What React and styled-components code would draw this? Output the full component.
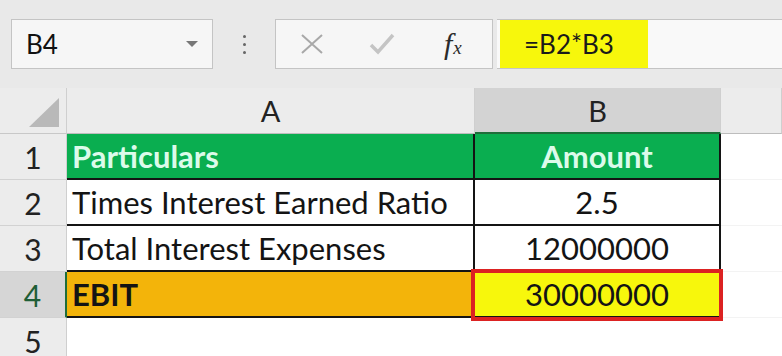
import React from "react";
import styled, { createGlobalStyle } from "styled-components";

const GlobalStyle = createGlobalStyle`
  body {
    margin: 0;
    background: #ffffff;
    overflow: hidden;
  }
`;

// 페이지 전체
const Page = styled.div`
  width: 782px;
  height: 356px;
  overflow: hidden;
  font-family: "Lato", "Liberation Sans", sans-serif;
  color: #151515;
`;

// 수식 입력줄 영역
const Toolbar = styled.div`
  height: 88px;
  background: #e9e9e9;
  display: flex;
  align-items: flex-start;
  padding-top: 19px;
  padding-left: 11px;
  box-sizing: border-box;
`;

const NameBox = styled.div`
  width: 202px;
  height: 50px;
  box-sizing: border-box;
  background: #f6f6f6;
  border: 1px solid #c4c4c4;
  display: flex;
  align-items: center;
  justify-content: space-between;
  padding: 0 14px 0 14px;
  font-size: 26px;
  color: #111;
`;

const DropArrow = styled.span`
  width: 0;
  height: 0;
  border-left: 6px solid transparent;
  border-right: 6px solid transparent;
  border-top: 6px solid #777;
`;

const Dots = styled.div`
  width: 62px;
  height: 50px;
  display: flex;
  flex-direction: column;
  align-items: center;
  justify-content: center;
  gap: 5px;
`;

const Dot = styled.span`
  width: 3px;
  height: 3px;
  border-radius: 50%;
  background: #666;
`;

const ButtonBox = styled.div`
  width: 218px;
  height: 50px;
  box-sizing: border-box;
  background: #f6f6f6;
  border: 1px solid #c4c4c4;
  display: flex;
  align-items: center;
  padding-left: 24px;
  gap: 45px;
`;

const Fx = styled.span`
  font-family: "Liberation Serif", "DejaVu Serif", serif;
  font-style: italic;
  font-size: 30px;
  color: #2a2a2a;
  margin-left: 4px;
  line-height: 1;

  sub {
    font-size: 19px;
    vertical-align: baseline;
    margin-left: 1px;
  }
`;

const FormulaInput = styled.div`
  flex: 1;
  height: 50px;
  margin-left: 4px;
  box-sizing: border-box;
  background: #f9f9f9;
  border-top: 1px solid #c4c4c4;
  border-bottom: 1px solid #c4c4c4;
  display: flex;
`;

const Highlight = styled.div`
  width: 148px;
  margin-left: 3px;
  background: #f7f70c;
  display: flex;
  align-items: center;
  padding-left: 24px;
  box-sizing: border-box;
  font-size: 26px;
  color: #1a1a1a;
`;

// 시트 격자
const Sheet = styled.div`
  display: grid;
  grid-template-columns: 67px 408px 246px 1fr;
  grid-auto-rows: 46px;
`;

const Corner = styled.div`
  background: #ececec;
  border-right: 1px solid #cfcfcf;
  border-bottom: 1px solid #c8c8c8;
  display: flex;
  align-items: flex-end;
  justify-content: flex-end;
  padding: 0 7px 6px 0;
`;

const ColHead = styled.div`
  background: ${(p) => (p.$active ? "#d3d3d3" : "#ececec")};
  border-right: 1px solid #cfcfcf;
  border-bottom: ${(p) => (p.$active ? "2px solid #1f6e3a" : "1px solid #bdbdbd")};
  display: flex;
  align-items: center;
  justify-content: center;
  font-size: 29px;
  color: #222;
`;

const RowHead = styled.div`
  background: ${(p) => (p.$active ? "#d6d6d6" : "#ececec")};
  border-right: ${(p) => (p.$active ? "2px solid #1f6e3a" : "1px solid #cfcfcf")};
  border-bottom: 1px solid #d2d2d2;
  display: flex;
  align-items: center;
  justify-content: center;
  font-size: 30px;
  color: ${(p) => (p.$active ? "#1f5e36" : "#222")};
`;

const fills = {
  green: "#0aae50",
  gold: "#f3b40a",
  yellow: "#f7f70c",
  none: "#ffffff",
};

const Cell = styled.div`
  background: ${(p) => fills[p.$fill || "none"]};
  border-right: 2px solid ${(p) => (p.$grid ? "#ececec" : "#141414")};
  border-bottom: 2px solid ${(p) => (p.$grid ? "#ececec" : "#141414")};
  display: flex;
  align-items: center;
  justify-content: ${(p) => (p.$center ? "center" : "flex-start")};
  padding-left: ${(p) => (p.$center ? "0" : "5px")};
  font-size: 31px;
  font-weight: ${(p) => (p.$bold ? 700 : 400)};
  color: ${(p) => (p.$fill === "green" ? "#dcfbea" : "#141414")};
  position: relative;
`;

const SelectBox = styled.div`
  position: absolute;
  left: -4px;
  top: -3px;
  right: -4px;
  bottom: -5px;
  border: 4px solid #dc2222;
  pointer-events: none;
`;

const Blank = styled.div`
  background: #ffffff;
  border-bottom: 1px solid #f3f3f3;
`;

const rows = [
  { label: "Particulars", value: "Amount", fill: "green", bold: true },
  { label: "Times Interest Earned Ratio", value: "2.5" },
  { label: "Total Interest Expenses", value: "12000000" },
  { label: "EBIT", value: "30000000", fill: "gold", bold: true, selected: true },
];

const App = () => {
  return (
    <Page>
      <GlobalStyle />
      <Toolbar>
        <NameBox>
          B4
          <DropArrow />
        </NameBox>
        <Dots>
          <Dot />
          <Dot />
          <Dot />
        </Dots>
        <ButtonBox>
          <svg width="24" height="20" viewBox="0 0 24 20">
            <path d="M2 1 L22 19 M22 1 L2 19" stroke="#a8a8a8" strokeWidth="2" fill="none" />
          </svg>
          <svg width="26" height="22" viewBox="0 0 26 22">
            <path d="M2 12 L9 19 L24 2" stroke="#c4c4c4" strokeWidth="3.5" fill="none" />
          </svg>
          <Fx>
            f<sub>x</sub>
          </Fx>
        </ButtonBox>
        <FormulaInput>
          <Highlight>=B2*B3</Highlight>
        </FormulaInput>
      </Toolbar>

      <Sheet>
        <Corner>
          <svg width="30" height="29" viewBox="0 0 30 29">
            <polygon points="30,0 30,29 0,29" fill="#b9b9b9" />
          </svg>
        </Corner>
        <ColHead>A</ColHead>
        <ColHead $active>B</ColHead>
        <ColHead />

        {rows.map((r, i) => (
          <React.Fragment key={r.label}>
            <RowHead $active={r.selected}>{i + 1}</RowHead>
            <Cell $fill={r.fill} $bold={r.bold}>
              {r.label}
            </Cell>
            <Cell $fill={r.selected ? "yellow" : r.fill} $bold={i === 0} $center>
              {r.value}
              {r.selected && <SelectBox />}
            </Cell>
            <Blank />
          </React.Fragment>
        ))}

        <RowHead>5</RowHead>
        <Blank />
        <Blank />
        <Blank />
      </Sheet>
    </Page>
  );
};

export default App;
